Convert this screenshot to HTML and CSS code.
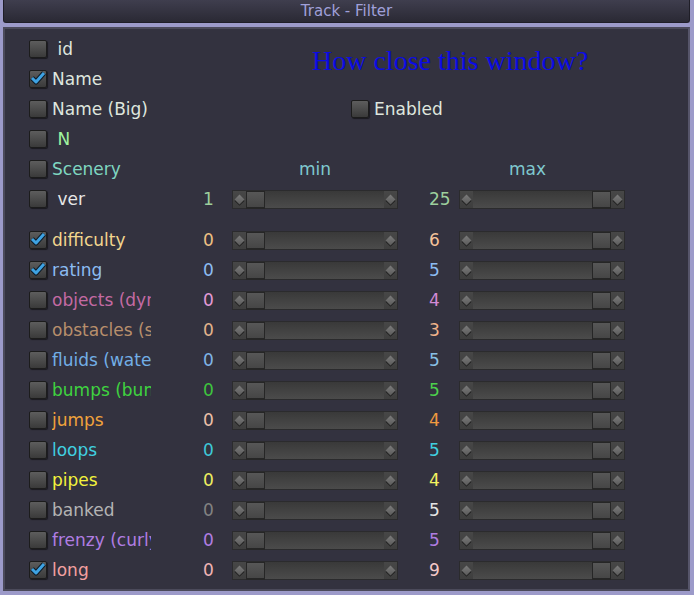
FILE: index.html
```html
<!DOCTYPE html>
<html>
<head>
    <title>Track - Filter</title>
    <link rel="stylesheet" href="styles.css">
</head>
<body>
<div class="titlebar">Track - Filter</div>

<div class="panel">
    <div class="top">
        <div class="opt"><span class="box"></span><span class="label">&nbsp;id</span></div>
        <div class="question">How close this window?</div>
        <div class="opt"><span class="box on"><svg viewBox="0 0 18 18"><path class="ck-back" d="M3 9 L7 13 L15 4"/><path class="ck" d="M3 9 L7 13 L15 4"/></svg></span><span class="label">Name</span></div>
        <div class="opt"><span class="box"></span><span class="label">Name (Big)</span></div>
        <div class="opt enabled"><span class="box"></span><span class="label">Enabled</span></div>
        <div class="opt c-n"><span class="box"></span><span class="label">&nbsp;N</span></div>
        <div class="opt c-scenery"><span class="box"></span><span class="label">Scenery</span></div>
        <div class="scale-head"><span class="head-min">min</span><span class="head-max">max</span></div>
    </div>

    <div class="row c-ver">
        <span class="box"></span><span class="label">&nbsp;ver</span>
        <span class="min-val">1</span>
        <div class="slider"><span class="arrow"></span><span class="track"><span class="thumb"></span></span><span class="arrow"></span></div>
        <span class="max-val">25</span>
        <div class="slider"><span class="arrow"></span><span class="track end"><span class="thumb"></span></span><span class="arrow"></span></div>
    </div>

    <div class="gap"></div>

    <div class="row c-difficulty">
        <span class="box on"><svg viewBox="0 0 18 18"><path class="ck-back" d="M3 9 L7 13 L15 4"/><path class="ck" d="M3 9 L7 13 L15 4"/></svg></span><span class="label">difficulty</span>
        <span class="min-val">0</span>
        <div class="slider"><span class="arrow"></span><span class="track"><span class="thumb"></span></span><span class="arrow"></span></div>
        <span class="max-val">6</span>
        <div class="slider"><span class="arrow"></span><span class="track end"><span class="thumb"></span></span><span class="arrow"></span></div>
    </div>
    <div class="row c-rating">
        <span class="box on"><svg viewBox="0 0 18 18"><path class="ck-back" d="M3 9 L7 13 L15 4"/><path class="ck" d="M3 9 L7 13 L15 4"/></svg></span><span class="label">rating</span>
        <span class="min-val">0</span>
        <div class="slider"><span class="arrow"></span><span class="track"><span class="thumb"></span></span><span class="arrow"></span></div>
        <span class="max-val">5</span>
        <div class="slider"><span class="arrow"></span><span class="track end"><span class="thumb"></span></span><span class="arrow"></span></div>
    </div>
    <div class="row c-objects">
        <span class="box"></span><span class="label">objects (dynamic)</span>
        <span class="min-val">0</span>
        <div class="slider"><span class="arrow"></span><span class="track"><span class="thumb"></span></span><span class="arrow"></span></div>
        <span class="max-val">4</span>
        <div class="slider"><span class="arrow"></span><span class="track end"><span class="thumb"></span></span><span class="arrow"></span></div>
    </div>
    <div class="row c-obstacles">
        <span class="box"></span><span class="label">obstacles (static)</span>
        <span class="min-val">0</span>
        <div class="slider"><span class="arrow"></span><span class="track"><span class="thumb"></span></span><span class="arrow"></span></div>
        <span class="max-val">3</span>
        <div class="slider"><span class="arrow"></span><span class="track end"><span class="thumb"></span></span><span class="arrow"></span></div>
    </div>
    <div class="row c-fluids">
        <span class="box"></span><span class="label">fluids (water)</span>
        <span class="min-val">0</span>
        <div class="slider"><span class="arrow"></span><span class="track"><span class="thumb"></span></span><span class="arrow"></span></div>
        <span class="max-val">5</span>
        <div class="slider"><span class="arrow"></span><span class="track end"><span class="thumb"></span></span><span class="arrow"></span></div>
    </div>
    <div class="row c-bumps">
        <span class="box"></span><span class="label">bumps (bumpy)</span>
        <span class="min-val">0</span>
        <div class="slider"><span class="arrow"></span><span class="track"><span class="thumb"></span></span><span class="arrow"></span></div>
        <span class="max-val">5</span>
        <div class="slider"><span class="arrow"></span><span class="track end"><span class="thumb"></span></span><span class="arrow"></span></div>
    </div>
    <div class="row c-jumps">
        <span class="box"></span><span class="label">jumps</span>
        <span class="min-val">0</span>
        <div class="slider"><span class="arrow"></span><span class="track"><span class="thumb"></span></span><span class="arrow"></span></div>
        <span class="max-val">4</span>
        <div class="slider"><span class="arrow"></span><span class="track end"><span class="thumb"></span></span><span class="arrow"></span></div>
    </div>
    <div class="row c-loops">
        <span class="box"></span><span class="label">loops</span>
        <span class="min-val">0</span>
        <div class="slider"><span class="arrow"></span><span class="track"><span class="thumb"></span></span><span class="arrow"></span></div>
        <span class="max-val">5</span>
        <div class="slider"><span class="arrow"></span><span class="track end"><span class="thumb"></span></span><span class="arrow"></span></div>
    </div>
    <div class="row c-pipes">
        <span class="box"></span><span class="label">pipes</span>
        <span class="min-val">0</span>
        <div class="slider"><span class="arrow"></span><span class="track"><span class="thumb"></span></span><span class="arrow"></span></div>
        <span class="max-val">4</span>
        <div class="slider"><span class="arrow"></span><span class="track end"><span class="thumb"></span></span><span class="arrow"></span></div>
    </div>
    <div class="row c-banked">
        <span class="box"></span><span class="label">banked</span>
        <span class="min-val">0</span>
        <div class="slider"><span class="arrow"></span><span class="track"><span class="thumb"></span></span><span class="arrow"></span></div>
        <span class="max-val">5</span>
        <div class="slider"><span class="arrow"></span><span class="track end"><span class="thumb"></span></span><span class="arrow"></span></div>
    </div>
    <div class="row c-frenzy">
        <span class="box"></span><span class="label">frenzy (curly)</span>
        <span class="min-val">0</span>
        <div class="slider"><span class="arrow"></span><span class="track"><span class="thumb"></span></span><span class="arrow"></span></div>
        <span class="max-val">5</span>
        <div class="slider"><span class="arrow"></span><span class="track end"><span class="thumb"></span></span><span class="arrow"></span></div>
    </div>
    <div class="row c-long">
        <span class="box on"><svg viewBox="0 0 18 18"><path class="ck-back" d="M3 9 L7 13 L15 4"/><path class="ck" d="M3 9 L7 13 L15 4"/></svg></span><span class="label">long</span>
        <span class="min-val">0</span>
        <div class="slider"><span class="arrow"></span><span class="track"><span class="thumb"></span></span><span class="arrow"></span></div>
        <span class="max-val">9</span>
        <div class="slider"><span class="arrow"></span><span class="track end"><span class="thumb"></span></span><span class="arrow"></span></div>
    </div>
</div>
</body>
</html>
```

FILE: styles.css
```css
* {
    box-sizing: border-box;
}

body {
    margin: 0;
    width: 694px;
    height: 595px;
    overflow: hidden;
    background-color: #9c9ac9;
    font-family: "DejaVu Sans", sans-serif;
    font-size: 17px;
    color: #dfe6de;
}

.titlebar {
    height: 23px;
    margin: 0 4px 0 3px;
    background: linear-gradient(#3f3e4e, #2a2934);
    border: 1px solid #1f1e27;
    border-top: none;
    border-radius: 0 0 3px 3px;
    color: #a0a0da;
    font-size: 15px;
    line-height: 22px;
    text-align: center;
}

.panel {
    margin: 4px 4px 0 3px;
    height: 564px;
    background-color: #33323f;
    border: 2px solid #4b4a5a;
    border-right-color: #56556a;
    padding: 5px 0 0 24px;
}

/* checkbox + name block */
.top {
    display: grid;
    grid-template-columns: 270px 1fr;
    grid-auto-rows: 30px;
}

.opt {
    grid-column: 1;
    display: flex;
    align-items: center;
}

.box {
    flex: none;
    width: 18px;
    height: 18px;
    margin-right: 5px;
    background: linear-gradient(#5d5d5d, #3a3a3a);
    border: 1px solid #1c1c1c;
    border-radius: 2px;
    box-shadow: 1px 1px 1px rgba(0, 0, 0, 0.5);
}

.box svg {
    display: block;
    width: 18px;
    height: 18px;
    margin: -2px 0 0 -1px;
}

.ck-back {
    fill: none;
    stroke: #0d1a26;
    stroke-width: 5;
    stroke-linejoin: round;
}

.ck {
    fill: none;
    stroke: #3ea2e2;
    stroke-width: 3;
    stroke-linejoin: round;
}

.label {
    white-space: nowrap;
}

.question {
    grid-column: 2;
    grid-row: 1 / span 2;
    align-self: start;
    margin: 11px 0 0 13px;
    font-family: "Liberation Serif", serif;
    font-size: 28px;
    line-height: 32px;
    color: #0b0be4;
}

.enabled {
    grid-column: 2;
    grid-row: 3;
    padding-left: 52px;
}

.scale-head {
    grid-column: 2;
    grid-row: 5;
    display: flex;
    align-items: center;
    color: #7fc9cf;
}

.head-min {
    width: 210px;
}

/* slider rows */
.row {
    display: flex;
    align-items: center;
    height: 30px;
}

.row .label {
    width: 99px;
    overflow: hidden;
}

.min-val {
    margin-left: 52px;
    width: 29px;
}

.max-val {
    margin-left: 31px;
    width: 30px;
}

.gap {
    height: 11px;
}

.slider {
    display: flex;
    width: 166px;
    height: 19px;
    border: 1px solid #2b2b2d;
    background: linear-gradient(#393939, #4b4b4b);
}

.arrow {
    flex: none;
    width: 13px;
    display: flex;
    align-items: center;
    justify-content: center;
    background: linear-gradient(#474747, #3e3e3e);
}

.arrow::before {
    content: "";
    width: 7px;
    height: 7px;
    transform: rotate(45deg);
    background: linear-gradient(135deg, #7c7c7c, #5a5a5a);
    box-shadow: 1px 1px 0 #232323;
}

.track {
    flex: 1;
    display: flex;
}

.track.end {
    justify-content: flex-end;
}

.thumb {
    width: 19px;
    height: 18px;
    background: linear-gradient(#575757, #464646);
    border: 1px solid #262626;
    border-bottom-width: 2px;
}

/* colours */
.c-n .label { color: #9ff29f; }
.c-scenery .label { color: #7fd6c0; }

.c-ver .label { color: #e6e6e6; }
.c-ver .min-val, .c-ver .max-val { color: #9dcf9d; }

.c-difficulty .label { color: #f2d68e; }
.c-difficulty .min-val { color: #eec083; }
.c-difficulty .max-val { color: #f5c39a; }

.c-rating .label, .c-rating .min-val, .c-rating .max-val { color: #8cbcf2; }

.c-objects .label { color: #c46aa3; }
.c-objects .min-val { color: #e39ad6; }
.c-objects .max-val { color: #d38ad6; }

.c-obstacles .label { color: #b88f6c; }
.c-obstacles .min-val { color: #e3b48c; }
.c-obstacles .max-val { color: #f0b38a; }

.c-fluids .label { color: #72aee6; }
.c-fluids .min-val { color: #7fb4e6; }
.c-fluids .max-val { color: #88c0e6; }

.c-bumps .label { color: #3fd23f; }
.c-bumps .min-val { color: #3ec43e; }
.c-bumps .max-val { color: #4cd04c; }

.c-jumps .label { color: #f0a23c; }
.c-jumps .min-val { color: #ecc0a8; }
.c-jumps .max-val { color: #f09a40; }

.c-loops .label, .c-loops .max-val { color: #40d0e0; }
.c-loops .min-val { color: #3ec8d8; }

.c-pipes .label { color: #f2f23c; }
.c-pipes .min-val { color: #eeee60; }
.c-pipes .max-val { color: #f4f460; }

.c-banked .label { color: #b4b4b4; }
.c-banked .min-val { color: #828282; }
.c-banked .max-val { color: #e4e4e4; }

.c-frenzy .label, .c-frenzy .min-val, .c-frenzy .max-val { color: #b07de2; }

.c-long .label { color: #f2a0a0; }
.c-long .min-val { color: #f0b4b4; }
.c-long .max-val { color: #f4c8c8; }
```
